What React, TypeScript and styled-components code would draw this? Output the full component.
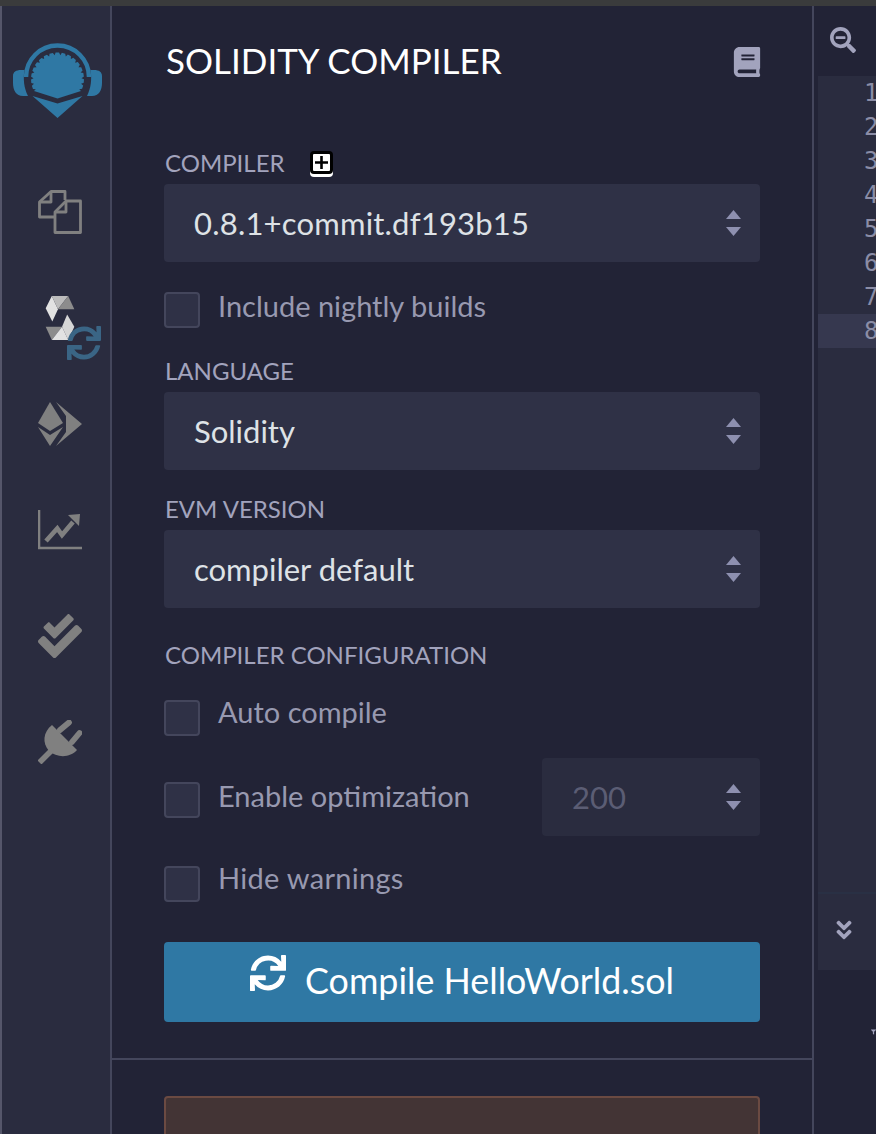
import React from "react";
import styled, { createGlobalStyle } from "styled-components";
import { FaBook, FaCheckDouble, FaSearchMinus, FaSync, FaAngleDoubleDown, FaFilter } from "react-icons/fa";

const Global = createGlobalStyle`
  html, body { margin: 0; padding: 0; background: #222336; }
  #root { width: 876px; height: 1134px; overflow: hidden; }
  * { box-sizing: border-box; }
`;

const Page = styled.div`
  width: 876px;
  height: 1134px;
  overflow: hidden;
  display: flex;
  flex-direction: column;
  background: #222336;
  font-family: "Lato", "Liberation Sans", sans-serif;
`;
const TopStrip = styled.div`
  height: 6px;
  flex: none;
  background: #3a3b3c;
`;
const Columns = styled.div`
  flex: 1;
  min-height: 0;
  display: flex;
`;
const IconPanel = styled.nav`
  width: 112px;
  flex: none;
  background: #2a2c3f;
  border-left: 2px solid #55566a;
  border-right: 2px solid #44465c;
  display: flex;
  flex-direction: column;
`;
const Logo = styled.svg`
  display: block;
  margin: 37px 0 0 11px;
`;
const NavList = styled.div`
  margin-top: 41px;
  display: flex;
  flex-direction: column;
`;
const NavItem = styled.div<{ $inset?: number }>`
  position: relative;
  height: 106px;
  display: flex;
  align-items: center;
  padding-left: ${(p) => p.$inset ?? 36}px;
  color: #808080;
`;
const SyncBadge = styled.span`
  position: absolute;
  left: 65px;
  top: 61px;
  display: flex;
  color: #3a6585;
`;
const Side = styled.main`
  width: 702px;
  flex: none;
  border-right: 2px solid #44465c;
  display: flex;
  flex-direction: column;
`;
const Form = styled.div`
  padding: 0 52px 0 52px;
  display: flex;
  flex-direction: column;
`;
const Header = styled.header`
  height: 112px;
  padding: 31px 0 0 2px;
  display: flex;
  justify-content: space-between;
  align-items: flex-start;
`;
const Title = styled.h1`
  margin: 0;
  font-size: 35px;
  line-height: 46px;
  font-weight: 400;
  color: #fff;
  white-space: nowrap;
`;
const HelpIcon = styled.span`
  display: flex;
  margin: 10px -2px 0 0;
  color: #a2a3bd;
`;
const Label = styled.div<{ $top: number }>`
  margin-top: ${(p) => p.$top}px;
  padding-left: 1px;
  height: 32px;
  display: flex;
  align-items: center;
  gap: 25px;
  font-size: 24px;
  line-height: 32px;
  color: #a2a3bd;
  white-space: nowrap;
`;
const PlusMark = styled.svg`
  display: block;
  margin-top: 1px;
`;
const SelectBox = styled.div<{ $width?: number; $disabled?: boolean; $top?: number; $track?: number }>`
  width: ${(p) => (p.$width ? `${p.$width}px` : "100%")};
  height: 78px;
  flex: none;
  margin-top: ${(p) => p.$top ?? 0}px;
  border-radius: 4px;
  background: ${(p) => (p.$disabled ? "#2a2c3f" : "#2f3146")};
  color: ${(p) => (p.$disabled ? "#5b5d74" : "#dee2e6")};
  padding: 0 19px 0 30px;
  display: flex;
  align-items: center;
  justify-content: space-between;
  font-size: 31px;
  letter-spacing: ${(p) => p.$track ?? 0}px;
  white-space: nowrap;
`;
const Caret = styled.svg`
  display: block;
  flex: none;
`;
const CheckRow = styled.label<{ $top: number; $height?: number }>`
  margin-top: ${(p) => p.$top}px;
  height: ${(p) => (p.$height ? `${p.$height}px` : "36px")};
  display: flex;
  align-items: center;
`;
const CheckBox = styled.span<{ $drop?: number }>`
  width: 36px;
  height: 36px;
  flex: none;
  margin-top: ${(p) => p.$drop ?? 0}px;
  border: 2px solid #44465c;
  border-radius: 4px;
  background: #2f3146;
`;
const CheckText = styled.span<{ $lift: number; $track?: number }>`
  margin: 0 0 ${(p) => p.$lift * 2}px 18px;
  flex: 1;
  font-size: 29px;
  line-height: 36px;
  letter-spacing: ${(p) => p.$track ?? 0}px;
  color: #9899b0;
  white-space: nowrap;
`;
const CompileButton = styled.button`
  margin-top: 40px;
  width: 100%;
  height: 80px;
  border: 0;
  border-radius: 4px;
  background: #2f78a4;
  color: #fff;
  font: inherit;
  font-size: 35.8px;
  display: flex;
  align-items: center;
  justify-content: center;
  gap: 19px;
  padding: 0 0 3px;
`;
const ButtonIcon = styled.span`
  display: flex;
  margin-top: -15px;
`;
const Divider = styled.hr`
  margin: 36px 0 0;
  height: 2px;
  border: 0;
  background: #44465c;
  flex: none;
`;
const WarningWrap = styled.div`
  padding: 36px 52px 0;
`;
const Warning = styled.div`
  height: 120px;
  border: 2px solid #6b4a42;
  border-radius: 4px;
  background: #433435;
  padding: 31px 30px;
  font-size: 28px;
  color: #dee2e6;
  white-space: nowrap;
`;
const Editor = styled.section`
  flex: 1;
  min-width: 0;
  display: flex;
  flex-direction: column;
`;
const EditorTop = styled.div`
  height: 70px;
  flex: none;
  padding: 21px 0 0 16px;
  color: #a2a3bd;
  display: flex;
`;
const Gutter = styled.div`
  margin-left: 4px;
  flex: 1;
  min-height: 0;
  background: #2a2c3f;
  border-bottom: 2px solid #293044;
  display: flex;
  flex-direction: column;
`;
const LineNo = styled.div<{ $active?: boolean }>`
  height: 34px;
  flex: none;
  padding-left: 46px;
  font-family: "DejaVu Sans Mono", monospace;
  font-size: 24px;
  line-height: 34px;
  color: #8b8da6;
  background: ${(p) => (p.$active ? "#36384f" : "transparent")};
`;
const TerminalBar = styled.div`
  margin-left: 4px;
  height: 76px;
  flex: none;
  background: #2a2c3f;
  color: #a2a3bd;
  padding: 24px 0 0 14px;
  display: flex;
`;
const TerminalRest = styled.div`
  height: 164px;
  flex: none;
  padding: 54px 0 0 57px;
  color: #a2a3bd;
  display: flex;
`;

const gearPath = () => {
  const cx = 44.5, cy = 36;
  const pts: string[] = [];
  const n = 17;
  const start = 205, end = -25;
  for (let i = 0; i < n; i++) {
    const a0 = start + ((end - start) * i) / n;
    const step = (end - start) / n;
    const seq: [number, number][] = [[a0, 24], [a0 + step * 0.2, 26.5], [a0 + step * 0.75, 26.5], [a0 + step, 24]];
    seq.forEach(([a, r]) => {
      const rad = (a * Math.PI) / 180;
      pts.push(`${(cx + r * Math.cos(rad)).toFixed(2)} ${(cy - r * Math.sin(rad)).toFixed(2)}`);
    });
  }
  return `M${pts.join(" L")} L68 48 L44.5 55.5 L21 48 Z`;
};

const RemixLogo = () => (
  <Logo width="89" height="75" viewBox="0 0 89 75" aria-label="Remix logo">
    <path d="M13 48 A31.5 31.5 0 1 1 76 48" fill="none" stroke="#2f78a4" strokeWidth="4.5" transform="translate(0 -14)" />
    <path d="M0 33 C0 29 3 27 8 27 L11.5 27 C10 36 11 45 15 53 L10 53 C3 53 0 47 0 40 Z" fill="#2f78a4" />
    <path d="M89 33 C89 29 86 27 81 27 L77.5 27 C79 36 78 45 74 53 L79 53 C86 53 89 47 89 40 Z" fill="#2f78a4" />
    <path d={gearPath()} fill="#2f78a4" />
    <path d="M19.5 53 L44.5 60.5 L69.5 53 L44.5 75 Z" fill="#2f78a4" />
  </Logo>
);

const FilesIcon = () => (
  <svg width="44" height="44" viewBox="0 0 44 44" fill="none" stroke="#808080" strokeWidth="2.8" strokeLinejoin="round" aria-label="File explorers">
    <path d="M27 10 V1.5 H13 L1.5 12 V27 H16" />
    <path d="M13 1.5 V12 H1.5" />
    <path d="M28 11 H42.5 V42.5 H17 V22 Z" />
    <path d="M28 11 V22 H17" />
  </svg>
);

const SolidityIcon = () => (
  <svg width="30" height="44" viewBox="0 0 28 43" aria-label="Solidity compiler">
    <polygon points="6,0 0,12 6.5,25 12,13" fill="#e2e2e2" />
    <polygon points="6,0 22,0 12,13" fill="#bcbcbc" />
    <polygon points="22,0 28,13 12,13" fill="#8c8c8c" />
    <polygon points="21,18 28,30 22,43 16,30" fill="#d6d6d6" />
    <polygon points="0,30 16,30 6,43" fill="#8c8c8c" />
    <polygon points="6,43 22,43 16,30" fill="#e2e2e2" />
  </svg>
);

const DeployIcon = () => (
  <svg width="44" height="44" viewBox="0 0 44 44" fill="#808080" aria-label="Deploy and run">
    <polygon points="12,0 0,21 12,29 25,21" />
    <polygon points="0,25 12,33 25,25 12,44" />
    <polygon points="18,0 44,22 18,44 28,30 28,14" />
  </svg>
);

const AnalysisIcon = () => (
  <svg width="44" height="40" viewBox="0 0 44 40" fill="#808080" aria-label="Solidity analyzers">
    <path d="M1 0 V38 H44" fill="none" stroke="#808080" strokeWidth="2.6" />
    <polyline points="8,31 19.3,18.5 24,25 35,12" fill="none" stroke="#808080" strokeWidth="4.6" />
    <polygon points="30,5 42,4 41,16" />
  </svg>
);

const PluginIcon = () => (
  <svg width="44" height="44" viewBox="0 0 44 44" fill="#808080" aria-label="Plugin manager">
    <path d="M14 5 L39 30 C32 38 19 38 11 31 C4 23 5 12 14 5 Z" />
    <path d="M1.5 42.5 L14 30" fill="none" stroke="#808080" strokeWidth="5.6" />
    <path d="M22 10 L31 2.5 M34 22 L41.5 13" fill="none" stroke="#808080" strokeWidth="5.8" strokeLinecap="round" />
  </svg>
);

const Updown = () => (
  <Caret width="15" height="26" viewBox="0 0 15 26" fill="#8e90b0">
    <polygon points="7.5,0 15,9 0,9" />
    <polygon points="0,17 15,17 7.5,26" />
  </Caret>
);

export default function App() {
  return (
    <Page>
      <Global />
      <TopStrip />
      <Columns>
        <IconPanel>
          <RemixLogo />
          <NavList>
            <NavItem><FilesIcon /></NavItem>
            <NavItem $inset={43}>
              <SolidityIcon />
              <SyncBadge><FaSync size={34} /></SyncBadge>
            </NavItem>
            <NavItem><DeployIcon /></NavItem>
            <NavItem><AnalysisIcon /></NavItem>
            <NavItem><FaCheckDouble size={44} /></NavItem>
            <NavItem><PluginIcon /></NavItem>
          </NavList>
        </IconPanel>
        <Side>
          <Form>
            <Header>
              <Title>SOLIDITY COMPILER</Title>
              <HelpIcon><FaBook size={30} /></HelpIcon>
            </Header>
            <Label $top={29}>
              COMPILER
              <PlusMark width="23" height="26" viewBox="0 0 23 26">
                <rect x="0" y="3" width="23" height="23" rx="4" fill="#fff" />
                <rect x="0" y="0" width="23" height="23" rx="4" fill="#000" />
                <rect x="3" y="3" width="17" height="17" rx="1" fill="#fff" />
                <path d="M11.5 5 V18 M5 11.5 H18" stroke="#000" strokeWidth="2.6" />
              </PlusMark>
            </Label>
            <SelectBox $top={5} $track={0.2}>0.8.1+commit.df193b15<Updown /></SelectBox>
            <CheckRow $top={30}><CheckBox /><CheckText $lift={4}>Include nightly builds</CheckText></CheckRow>
            <Label $top={27}>LANGUAGE</Label>
            <SelectBox $top={5}>Solidity<Updown /></SelectBox>
            <Label $top={23}>EVM VERSION</Label>
            <SelectBox $top={5}>compiler default<Updown /></SelectBox>
            <Label $top={31}>COMPILER CONFIGURATION</Label>
            <CheckRow $top={29}><CheckBox /><CheckText $lift={6}>Auto compile</CheckText></CheckRow>
            <CheckRow $top={22} $height={78}>
              <CheckBox $drop={6} /><CheckText $lift={1}>Enable optimization</CheckText>
              <SelectBox $width={218} $disabled>200<Updown /></SelectBox>
            </CheckRow>
            <CheckRow $top={30}><CheckBox /><CheckText $lift={6} $track={0.3}>Hide warnings</CheckText></CheckRow>
            <CompileButton>
              <ButtonIcon><FaSync size={36} /></ButtonIcon>
              Compile HelloWorld.sol
            </CompileButton>
          </Form>
          <Divider />
          <WarningWrap><Warning>Use of latest compiler</Warning></WarningWrap>
        </Side>
        <Editor>
          <EditorTop><FaSearchMinus size={26} /></EditorTop>
          <Gutter>
            {[1, 2, 3, 4, 5, 6, 7, 8].map((n) => (
              <LineNo key={n} $active={n === 8}>{n}</LineNo>
            ))}
          </Gutter>
          <TerminalBar><FaAngleDoubleDown size={24} /></TerminalBar>
          <TerminalRest><FaFilter size={16} /></TerminalRest>
        </Editor>
      </Columns>
    </Page>
  );
}
